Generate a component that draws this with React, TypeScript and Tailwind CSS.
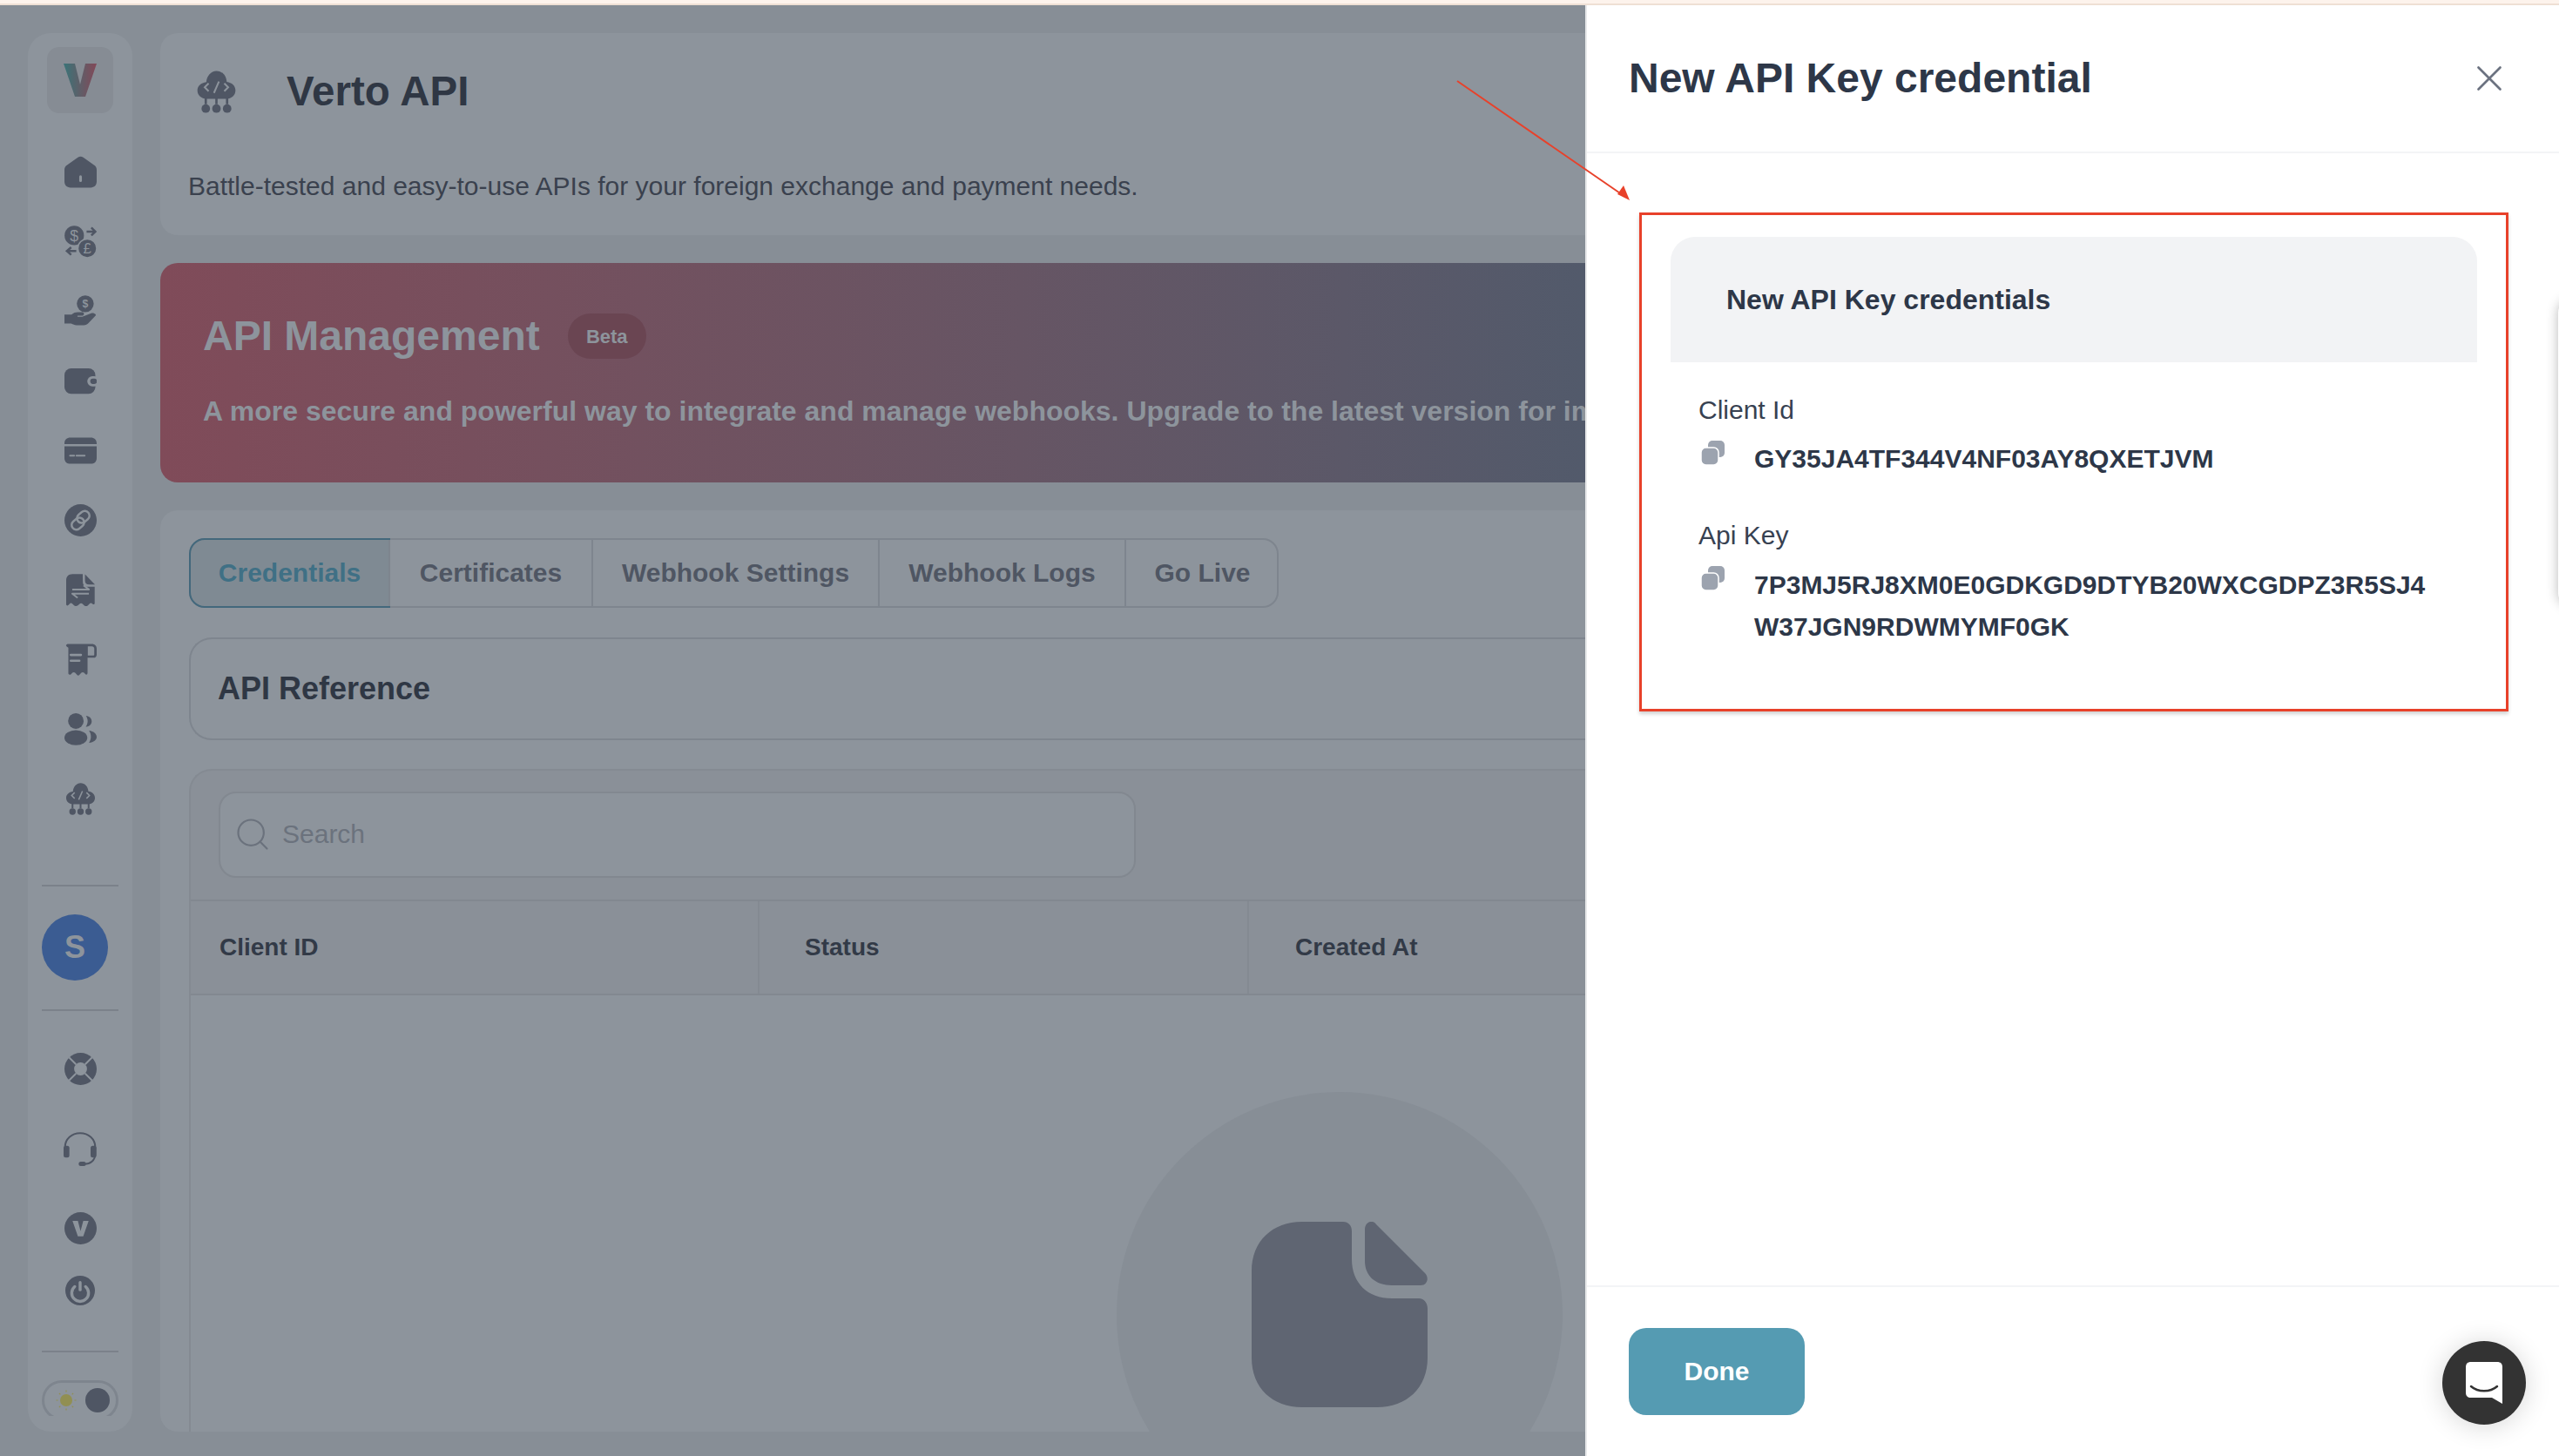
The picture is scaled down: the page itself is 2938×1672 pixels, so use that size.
import { ReactNode } from "react";
import { Search, X } from "lucide-react";

const BG = "#8d949c";

function Ico({ children, size = 37 }: { children: ReactNode; size?: number }) {
  return (
    <svg width={size} height={size} viewBox="0 0 24 24" fill="#4f5664">
      {children}
    </svg>
  );
}

const HomeIcon = () => (
  <Ico>
    <path d="M10 1.2 2 6.8C.7 7.7 0 8.8 0 10.4V19c0 2.8 1.8 4.6 4.5 4.6h15c2.7 0 4.5-1.8 4.5-4.6v-8.6c0-1.6-.7-2.7-2-3.6l-8-5.6c-1.3-.9-2.7-.9-4 0Z" />
    <rect x="11" y="14.5" width="2" height="5" rx="1" fill={BG} />
  </Ico>
);

const ExchangeIcon = () => (
  <Ico>
    <circle cx="7.3" cy="7.4" r="7.2" />
    <circle cx="17" cy="17" r="7" stroke={BG} strokeWidth="1" />
    <text x="7.3" y="11.6" textAnchor="middle" fontSize="11.5" fontWeight="400" fill={BG}>$</text>
    <text x="17" y="21" textAnchor="middle" fontSize="11" fontWeight="400" fill={BG}>£</text>
    <path d="M16.5 4.5h6.2M20 1.600l3 2.900-3 2.900M8.800 19H2.200M5 16.200 1.800 19 5 21.800" fill="none" stroke="#4f5664" strokeWidth="1.6" />
  </Ico>
);

const HandIcon = () => (
  <Ico>
    <circle cx="15.5" cy="6.4" r="6.3" />
    <text x="15.5" y="9.4" textAnchor="middle" fontSize="8" fontWeight="700" fill={BG}>$</text>
    <path d="M0 14.5h5.3c1.5-1.4 3-1.800 4.600-1.800h3.400c1.400 0 1.800 2.200.2 2.600h-3.800v.7h3.600l6.600-2.600c2-.6 4 1 3.400 1.600l-5.400 5.700c-1 1-2 1.600-3.500 1.600H9c-1.600 0-2.400-.6-4-1.200H0Z" />
  </Ico>
);

const WalletIcon = () => (
  <Ico>
    <rect x="0" y="2.6" width="23" height="19" rx="5" />
    <rect x="17" y="8.4" width="9" height="7.6" rx="3.8" fill={BG} />
    <rect x="19.2" y="10.2" width="5" height="4" rx="2" />
  </Ico>
);

const CardIcon = () => (
  <Ico>
    <path d="M0 7.200V6.500C0 3.800 1.800 2.200 4.500 2.200h15C22.200 2.200 24 3.800 24 6.500v.7ZM0 8.800h24v8.700c0 2.700-1.800 4.300-4.500 4.300h-15C1.800 21.800 0 20.200 0 17.500Z" />
    <path d="M4.200 15.700h3M9 15.700h6" stroke={BG} strokeWidth="1.4" strokeLinecap="round" />
  </Ico>
);

const LinkIcon = () => (
  <Ico>
    <circle cx="12" cy="12" r="12" />
    <g fill="none" stroke={BG} strokeWidth="1.6">
      <rect x="9" y="6" width="10" height="7" rx="3.500" transform="rotate(-40 14 9.500)" />
      <rect x="5" y="11" width="10" height="7" rx="3.500" transform="rotate(-40 10 14.500)" />
    </g>
  </Ico>
);

const DocExchangeIcon = () => (
  <Ico>
    <path d="M13.600.2H6C3 .2 1.300 2 1.300 5v17.600c0 1 1 1.400 1.700.6l.8-.9c.6-.7 1.500-.7 2.200 0l1 1c.7.8 1.900.8 3 .2l1.300-1.200c.7-.7 1.600-.6 2.200.1l1 1c1 1 2.300 1 3.100 0l1-1.100c.6-.7 1.600-.7 2.300 0 .8.8 1.600.4 1.600-.6V9.600h-5.200c-2.300 0-3.600-1.400-3.600-3.600Z" />
    <path d="M15.300.3 22.700 8h-4.300c-1.900 0-3.100-1.100-3.100-3Z" />
    <path d="M5.800 11.600h12.400l-4-3M18.200 14.800H5.800l4 3" fill="none" stroke={BG} strokeWidth="1.3" strokeLinejoin="round" />
  </Ico>
);

const ReceiptIcon = () => (
  <Ico>
    <path d="M3 .3h17.500c2 0 3.500 1.400 3.500 3.400v4.500c0 1.400-1 2.400-2.400 2.400h-4.400v11.300c0 1.200-1 1.600-1.700.8l-.9-.9c-.6-.6-1.500-.6-2 0l-1.500 1.600c-.5.5-1.200.5-1.700 0l-1.500-1.600c-.5-.6-1.400-.6-2 0l-1 1c-.9.8-2 .4-2-.7V3C0 1.400 1.400.3 3 .3Z" />
    <path d="M17.400 2.100h3c1.200 0 1.800.7 1.800 1.800v4.200c0 .5-.3.8-.8.8h-4Z" fill={BG} />
    <path d="M4.700 8.500h7.600M4.700 12.800h6.400" stroke={BG} strokeWidth="1.7" strokeLinecap="round" />
  </Ico>
);

const UsersIcon = () => (
  <Ico>
    <circle cx="8.500" cy="5.800" r="5.800" />
    <ellipse cx="8.500" cy="18.300" rx="8.500" ry="5.600" />
    <path d="M16 1.900c2.600.2 4.300 2 4.300 4.100 0 2.300-1.800 4-4.400 4.100 1.800-2.500 1.900-5.600.1-8.200ZM18.300 13c3.400.4 5.700 2.400 5.700 4.600 0 2.300-2.300 4-5.700 4.400 1.900-2.600 1.900-6.300 0-9Z" />
  </Ico>
);

function CloudIcon({ size = 37 }: { size?: number }) {
  return (
    <Ico size={size}>
      <path d="M6.300 6.500C6.500 3 9 .2 12 .2c3.200 0 5.600 2.600 5.800 6.200 2.900.4 4.900 2.200 4.900 4.800 0 2.800-2.200 4.700-5 4.700H6.500c-3 0-5.200-1.900-5.200-4.700 0-2.500 2-4.300 5-4.700Z" />
      <path d="M7.600 7.200 5.400 9.400l2.200 2.200M16.400 7.200l2.200 2.200-2.200 2.200M13.400 6.200l-2.800 6.400" fill="none" stroke={BG} strokeWidth="1" />
      <path d="M6 15v4M12 15v4M18 15v4" stroke="#4f5664" strokeWidth="1.3" />
      <circle cx="6" cy="21.400" r="2.400" />
      <circle cx="12" cy="21.400" r="2.400" />
      <circle cx="18" cy="21.400" r="2.400" />
    </Ico>
  );
}

const BuoyIcon = () => (
  <Ico>
    <circle cx="12" cy="12" r="12" />
    <circle cx="12" cy="12" r="4.800" fill={BG} />
    <path d="M3.400 3.400 8.600 8.600M20.600 3.400l-5.200 5.200M3.400 20.600l5.200-5.200M20.600 20.600l-5.200-5.200" stroke={BG} strokeWidth="1.3" />
  </Ico>
);

const HeadsetIcon = () => (
  <Ico size={40}>
    <path d="M1.600 13V10.500C1.600 4.800 6.200.8 12 .8s10.400 4 10.400 9.700V15c0 4.600-3.400 7-7.400 7" fill="none" stroke="#4f5664" strokeWidth="1.2" />
    <rect x=".6" y="9.500" width="4" height="8" rx="1.500" />
    <rect x="19.200" y="9.500" width="4" height="8" rx="1.500" />
    <rect x="11" y="20.400" width="5" height="3" rx="1.500" />
  </Ico>
);

const VIcon = () => (
  <Ico>
    <circle cx="12" cy="12" r="12" />
    <path d="M6 6.500h4l2 7.600 2-7.600h4L14 18h-4Z" fill={BG} />
  </Ico>
);

const PowerIcon = () => (
  <Ico size={34}>
    <circle cx="12" cy="12" r="12" />
    <path d="M7.600 8.800a6.800 6.800 0 1 0 8.800 0" fill="none" stroke={BG} strokeWidth="2.400" strokeLinecap="round" />
    <path d="M12 5.400v6" stroke={BG} strokeWidth="2.400" strokeLinecap="round" />
  </Ico>
);

const CopyIcon = () => (
  <svg width="27" height="28" viewBox="0 0 27 28" fill="#9ca3af" className="shrink-0">
    <rect x="8" y="0" width="19" height="19" rx="5" />
    <rect x="0" y="8" width="20" height="20" rx="5.500" stroke="#fff" strokeWidth="1.5" />
  </svg>
);

const TABS = ["Credentials", "Certificates", "Webhook Settings", "Webhook Logs", "Go Live"];
const TAB_W = ["w-[229px]", "w-[233px]", "w-[329px]", "w-[283px]", "w-[177px]"];
const NAV_TOP = [HomeIcon, ExchangeIcon, HandIcon, WalletIcon, CardIcon, LinkIcon, DocExchangeIcon, ReceiptIcon, UsersIcon, CloudIcon];

export default function App() {
  return (
    <div className="relative flex h-[1672px] w-[2938px] flex-col overflow-hidden bg-[#878e96] font-['Liberation_Sans',Arial,sans-serif]">
      <div className="h-[6px] shrink-0 border-b-[2px] border-[#efe0d4] bg-[#fdf3ec]" />
      <div className="flex min-h-0 flex-1">
        {/* page behind the drawer */}
        <div className="flex w-[1820px] shrink-0 gap-[32px] overflow-hidden pt-[32px] pb-[28px] pl-[32px]">
          <aside className="flex w-[120px] shrink-0 flex-col items-center overflow-hidden rounded-[26px] bg-[#8d949c] pt-[16px] pb-[16px]">
            <div className="flex h-[76px] w-[76px] shrink-0 items-center justify-center rounded-[14px] bg-[#868c94]">
              <svg width="38" height="38" viewBox="0 0 38 38">
                <defs>
                  <linearGradient id="logo" x1="0" x2="1" y1="0" y2="0">
                    <stop offset="0" stopColor="#3a7478" />
                    <stop offset="1" stopColor="#834858" />
                  </linearGradient>
                </defs>
                <path d="M0 0h13l6 24L25 0h13L25 38H13Z" fill="url(#logo)" />
              </svg>
            </div>
            <div className="mt-[27px] flex flex-col items-center">
              {NAV_TOP.map((Icon, i) => (
                <div key={i} className="flex h-[80px] items-center justify-center">
                  <Icon />
                </div>
              ))}
            </div>
            <div className="mt-[59px] h-[2px] w-[88px] shrink-0 bg-[#7b818a]" />
            <div className="mt-[32px] flex h-[76px] w-[88px] shrink-0">
              <div className="flex h-[76px] w-[76px] items-center justify-center rounded-full bg-[#3b5c92] text-[36px] font-bold text-[#8d949c]">S</div>
            </div>
            <div className="mt-[33px] h-[2px] w-[88px] shrink-0 bg-[#7b818a]" />
            <div className="mt-[46px] flex h-[40px] items-center"><BuoyIcon /></div>
            <div className="mt-[53px] flex h-[40px] items-center"><HeadsetIcon /></div>
            <div className="mt-[50px] flex h-[40px] items-center"><VIcon /></div>
            <div className="mt-[32px] flex h-[40px] items-center"><PowerIcon /></div>
            <div className="mt-[49px] h-[2px] w-[88px] shrink-0 bg-[#7b818a]" />
            <div className="mt-[32px] h-[41px] w-[88px] shrink-0 overflow-hidden">
              <div className="flex h-[46px] w-[88px] items-center justify-between rounded-full border-[3px] border-[#7e858e] pr-[7px] pl-[13px]">
                <svg width="24" height="24" viewBox="0 0 24 24">
                  <circle cx="12" cy="12" r="7" fill="#918f52" />
                  <path d="M12 .5v2M12 21.500v2M.5 12h2M21.500 12h2M3.900 3.900l1.400 1.400M18.700 18.700l1.400 1.400M3.900 20.100l1.400-1.400M18.700 5.300l1.400-1.400" stroke="#918f52" strokeWidth="1.200" />
                </svg>
                <div className="h-[28px] w-[28px] rounded-full bg-[#4f5664]" />
              </div>
            </div>
          </aside>

          <main className="flex min-w-0 flex-1 flex-col gap-[32px]">
            <section className="h-[232px] shrink-0 rounded-l-[20px] bg-[#8d949c] pt-[37px] pl-[32px]">
              <div className="ml-[8px] flex h-[60px] items-center gap-[56px]">
                <CloudIcon size={49} />
                <h1 className="text-[47.500px] font-bold text-[#2f3744]">Verto API</h1>
              </div>
              <p className="mt-[59px] text-[30px] leading-[40px] text-[#3a414e]">
                Battle-tested and easy-to-use APIs for your foreign exchange and payment needs.
              </p>
            </section>

            <section className="h-[252px] shrink-0 overflow-hidden rounded-l-[20px] bg-gradient-to-r from-[#804b59] to-[#525a6b] pt-[58px] pl-[49px]">
              <div className="flex h-[52px] items-center gap-[32px]">
                <h2 className="text-[48px] font-bold text-[#8d949c]">API Management</h2>
                <span className="flex h-[52px] w-[90px] items-center justify-center rounded-full bg-[#6a4552] text-[22px] font-bold text-[#8d949c]">Beta</span>
              </div>
              <p className="mt-[40px] text-[32px] leading-[40px] font-bold whitespace-nowrap text-[#8d949c]">
                A more secure and powerful way to integrate and manage webhooks. Upgrade to the latest version for improved security and reliability.
              </p>
            </section>

            <section className="flex min-h-0 flex-1 flex-col rounded-l-[20px] bg-[#8d949c] pt-[32px] pl-[33px]">
              <div className="flex h-[80px] w-[1251px] shrink-0 rounded-[18px] border-2 border-[#7e858e]">
                {TABS.map((t, i) => (
                  <div
                    key={t}
                    className={
                      i === 0
                        ? "-m-[2px] flex w-[231px] shrink-0 items-center justify-center rounded-l-[18px] border-2 border-[#43687c] bg-[#7f8a93] pb-[2px] text-[30px] font-bold text-[#3f7085]"
                        : `flex shrink-0 items-center justify-center border-l-2 border-[#7e858e] pb-[2px] text-[30px] font-bold text-[#4f5663] ${TAB_W[i]}`
                    }
                  >
                    {t}
                  </div>
                ))}
              </div>

              <div className="mt-[34px] flex h-[118px] shrink-0 items-center rounded-l-[26px] border-y-2 border-l-2 border-[#7e858e] pl-[31px]">
                <h3 className="text-[36px] font-bold text-[#2f3744]">API Reference</h3>
              </div>

              <div className="mt-[33px] flex min-h-0 flex-1 flex-col rounded-tl-[26px] border-t-2 border-l-2 border-[#848a92] bg-[#8a9098]">
                <div className="h-[148px] shrink-0 pt-[24px] pl-[32px]">
                  <div className="flex h-[99px] w-[1053px] items-center rounded-[20px] border-2 border-[#828890] bg-[#8d949c] pb-[2px] pl-[15px] text-[30px] text-[#6b727d]">
                    <Search size={44} strokeWidth={1.2} className="text-[#6b727d]" />
                    <span className="ml-[12px]">Search</span>
                  </div>
                </div>
                <div className="flex h-[110px] shrink-0 items-center border-y-2 border-[#828890] text-[28px] font-bold text-[#323a47]">
                  <div className="flex h-full w-[653px] items-center border-r-2 border-[#848a92] pl-[33px]">Client ID</div>
                  <div className="flex h-full w-[562px] items-center border-r-2 border-[#848a92] pl-[52px]">Status</div>
                  <div className="pl-[53px]">Created At</div>
                </div>
                <div className="min-h-0 flex-1 overflow-hidden bg-[#8d949c] pt-[111px] pl-[1063px]">
                  <div className="flex h-[512px] w-[512px] items-center justify-center rounded-full bg-[#878e96]">
                    <svg width="202" height="213" viewBox="0 0 202 213" fill="#5f6572" className="mb-[2px]">
                      <path d="M58 0h47c6 0 10 4 10 11v32c0 27 18 45 46 45h31c6 0 10 5 10 12v56c0 35-24 57-58 57H58c-34 0-58-22-58-57V57C0 22 24 0 58 0Z" />
                      <path d="M130 9c0-9 9-12 13-6l56 56c5 5 3 14-5 14h-33c-19 0-31-11-31-28Z" />
                    </svg>
                  </div>
                </div>
              </div>
            </section>
          </main>
        </div>

        {/* drawer */}
        <div className="flex min-w-0 flex-1 flex-col border-l-2 border-[#e8e9ea] bg-white">
          <header className="flex h-[170px] shrink-0 items-center justify-between border-b-2 border-[#f3f4f6] pr-[55px] pl-[48px]">
            <h2 className="text-[48px] font-bold text-[#2d3748]">New API Key credential</h2>
            <X size={50} strokeWidth={1.3} className="text-[#6b7280]" />
          </header>

          <div className="min-h-0 flex-1 pt-[68px] pl-[60px]">
            <div className="h-[573px] w-[998px] border-[3px] border-[#e8412a] px-[33px] pt-[25px] shadow-[0_3px_4px_rgba(0,0,0,0.18)]">
              <div className="flex h-[144px] items-center rounded-t-[28px] bg-[#f2f3f5] pl-[64px] text-[32px] font-bold text-[#2d3748]">
                New API Key credentials
              </div>
              <div className="pt-[35px] pl-[32px] text-[#2d3748]">
                <p className="text-[30px] leading-[40px] text-[#374151]">Client Id</p>
                <div className="mt-[12px] ml-[3px] flex">
                  <div className="mt-[3px]"><CopyIcon /></div>
                  <p className="ml-[34px] w-[790px] text-[30px] leading-[48px] font-bold break-all">GY35JA4TF344V4NF03AY8QXETJVM</p>
                </div>
                <p className="mt-[44px] text-[30px] leading-[40px] text-[#374151]">Api Key</p>
                <div className="mt-[13px] ml-[3px] flex">
                  <div className="mt-[2px]"><CopyIcon /></div>
                  <p className="ml-[34px] w-[790px] text-[30px] leading-[48px] font-bold break-all">7P3MJ5RJ8XM0E0GDKGD9DTYB20WXCGDPZ3R5SJ4W37JGN9RDWMYMF0GK</p>
                </div>
              </div>
            </div>
          </div>

          <footer className="h-[196px] shrink-0 border-t-2 border-[#f3f4f6] pt-[47px] pl-[48px]">
            <button className="flex h-[100px] w-[202px] items-center justify-center rounded-[20px] bg-[#559bb2] pb-[2px] text-[30px] font-bold text-white">
              Done
            </button>
          </footer>
        </div>
      </div>

      {/* annotation arrow */}
      <svg className="absolute top-0 left-0" width="2938" height="300" viewBox="0 0 2938 300" fill="none">
        <path d="M1673 93 1866 226" stroke="#e8412a" strokeWidth="2" />
        <path d="M1871 230 1857 223 1864 213Z" fill="#e8412a" />
      </svg>

      {/* something parked just past the right edge, only its shadow shows */}
      <div className="absolute top-[345px] left-[2937px] h-[350px] w-[40px] rounded-[14px] bg-white shadow-[0_0_14px_rgba(0,0,0,0.28)]" />

      {/* chat launcher */}
      <button className="absolute top-[1540px] left-[2804px] flex h-[96px] w-[96px] items-center justify-center rounded-full bg-[#333333] shadow-[0_2px_30px_rgba(0,0,0,0.16)]">
        <svg width="42" height="48" viewBox="0 0 42 48">
          <path d="M6 0h30c4 0 6 2 6 6v42l-12-7H6c-4 0-6-2-6-6V6c0-4 2-6 6-6Z" fill="#fff" />
          <path d="M6 28c8 7 22 7 30 0" fill="none" stroke="#333" strokeWidth="2.500" strokeLinecap="round" />
        </svg>
      </button>
    </div>
  );
}
